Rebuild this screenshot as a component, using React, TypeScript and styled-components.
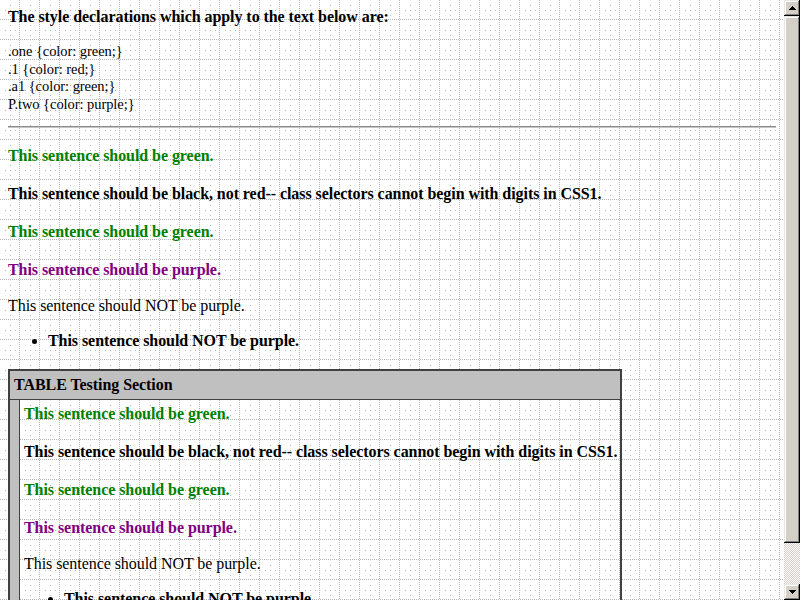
import React from "react";
import styled, { createGlobalStyle } from "styled-components";

// background tile of the test page: dotted grid lines every 20px with a small plus of dots
const gridTile = (() => {
  let cells = "";
  for (let i = 0; i < 20; i += 2) {
    cells += `<rect x='19' y='${i}' width='1' height='1'/><rect x='${i}' y='19' width='1' height='1'/>`;
  }
  const dots = [
    [10, 5],
    [5, 10],
    [10, 10],
    [15, 10],
    [10, 15],
  ];
  dots.forEach(([x, y]) => {
    cells += `<rect x='${x}' y='${y}' width='1' height='1'/>`;
  });
  const svg = `<svg xmlns='http://www.w3.org/2000/svg' width='20' height='20' shape-rendering='crispEdges'><g fill='#b4b4b4'>${cells}</g></svg>`;
  return `url("data:image/svg+xml,${encodeURIComponent(svg)}")`;
})();

const GlobalStyle = createGlobalStyle`
  html, body {
    margin: 0;
    padding: 0;
    background: #ffffff;
  }
  body {
    font-family: "Liberation Serif", "Times New Roman", serif;
    font-size: 16px;
    letter-spacing: -0.06px;
    color: #000000;
  }
`;

const Window = styled.div`
  display: flex;
  width: 800px;
  height: 600px;
  overflow: hidden;
`;

const Page = styled.div`
  flex: 1;
  height: 600px;
  overflow: hidden;
  padding: 7px 8px 0;
  box-sizing: border-box;
  background-color: #ffffff;
  background-image: ${gridTile};
  background-repeat: repeat;
`;

const Heading = styled.p`
  margin: 0;
  font-weight: bold;
  line-height: 20px;
`;

const Declarations = styled.div`
  margin: 16px 0 0;
  font-size: 14.5px;
  line-height: 17.5px;
`;

const Rule = styled.hr`
  margin: 13px 0 0;
  height: 0;
  border: none;
  border-top: 1px solid #8c8c8c;
  border-bottom: 1px solid #c4c4c4;
`;

const Sentence = styled.p<{ $tone?: "green" | "purple" | "black"; $plain?: boolean }>`
  margin: ${(p) => (p.$plain ? "16px" : "18px")} 0 0;
  line-height: 20px;
  font-weight: ${(p) => (p.$plain ? "normal" : "bold")};
  color: ${(p) =>
    p.$tone === "green" ? "#008000" : p.$tone === "purple" ? "#800080" : "#000000"};
`;

const List = styled.ul`
  margin: 15px 0 18px;
  padding-left: 40px;
  list-style: disc;
`;

const Item = styled.li`
  line-height: 20px;
  font-weight: bold;
`;

const Table = styled.div`
  display: grid;
  width: fit-content;
  grid-template-columns: 10px auto;
  border: 2px solid #404040;
  border-bottom: none;
`;

const HeaderCell = styled.div`
  grid-column: 1 / span 2;
  background: #c0c0c0;
  padding: 4px;
  line-height: 20px;
  font-weight: bold;
  border-bottom: 1px solid #404040;
`;

const SideCell = styled.div`
  background: #c0c0c0;
  border-right: 1px solid #404040;
`;

const BodyCell = styled.div`
  padding: 4px 3px 0 4px;

  & > p:first-child {
    margin-top: 0;
  }
`;

const ScrollBar = styled.div`
  width: 16px;
  height: 600px;
  display: flex;
  flex-direction: column;
  background-color: #ffffff;
  background-image: repeating-conic-gradient(#d4d0c8 0 25%, #ffffff 0 50%);
  background-size: 2px 2px;
`;

const bevel = `
  background: #d4d0c8;
  box-sizing: border-box;
  box-shadow: inset -1px -1px #000000, inset 1px 1px #e8e6e1, inset -2px -2px #808080,
    inset 2px 2px #ffffff;
`;

const ArrowButton = styled.div`
  ${bevel}
  width: 16px;
  height: 16px;
  display: flex;
  align-items: center;
  justify-content: center;
  flex-shrink: 0;
`;

const Thumb = styled.div`
  ${bevel}
  width: 16px;
  height: 527px;
  flex-shrink: 0;
`;

const Track = styled.div`
  flex: 1;
`;

const Arrow: React.FC<{ down?: boolean }> = ({ down }) => (
  <svg width="7" height="4" viewBox="0 0 7 4" shapeRendering="crispEdges">
    <polygon points={down ? "0,0 7,0 3.5,4" : "3.5,0 7,4 0,4"} fill="#000000" />
  </svg>
);

const TestSentences: React.FC = () => (
  <>
    <Sentence $tone="green">This sentence should be green.</Sentence>
    <Sentence>
      This sentence should be black, not red-- class selectors cannot begin with digits in
      CSS1.
    </Sentence>
    <Sentence $tone="green">This sentence should be green.</Sentence>
    <Sentence $tone="purple">This sentence should be purple.</Sentence>
    <Sentence $plain>This sentence should NOT be purple.</Sentence>
    <List>
      <Item>This sentence should NOT be purple.</Item>
    </List>
  </>
);

const App: React.FC = () => {
  return (
    <Window>
      <GlobalStyle />
      <Page>
        <Heading>The style declarations which apply to the text below are:</Heading>
        <Declarations>
          <div>.one {"{color: green;}"}</div>
          <div>.1 {"{color: red;}"}</div>
          <div>.a1 {"{color: green;}"}</div>
          <div>P.two {"{color: purple;}"}</div>
        </Declarations>
        <Rule />
        <TestSentences />
        <Table>
          <HeaderCell>TABLE Testing Section</HeaderCell>
          <SideCell />
          <BodyCell>
            <TestSentences />
          </BodyCell>
        </Table>
      </Page>
      <ScrollBar>
        <ArrowButton>
          <Arrow />
        </ArrowButton>
        <Thumb />
        <Track />
        <ArrowButton>
          <Arrow down />
        </ArrowButton>
      </ScrollBar>
    </Window>
  );
};

export default App;
